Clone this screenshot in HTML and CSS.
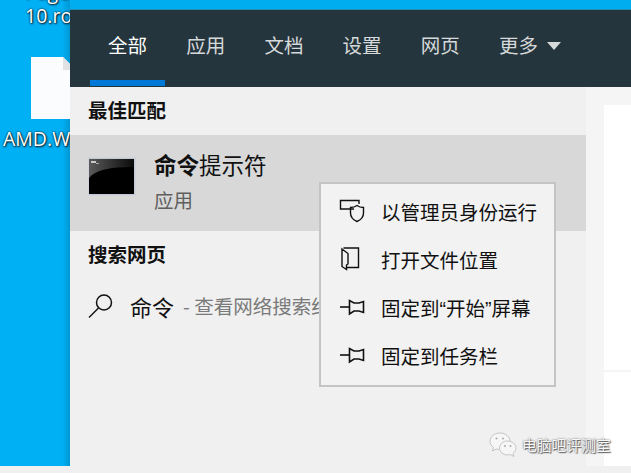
FILE: index.html
```html
<!DOCTYPE html>
<html lang="zh-CN">
<head>
<meta charset="utf-8">
<title>命令提示符</title>
<link rel="stylesheet" href="styles.css">
</head>
<body>
<div class="screen">
  <div class="desktop">
    <div class="desk-label desk-top">Page<br>10.rom</div>
    <div class="file-icon"><svg width="39" height="62" viewBox="0 0 39 62"><path d="M0 0H32L39 7V62H0Z" fill="#fbfcfd"/><path d="M32 0V13H39V7Z" fill="#dfe1e3"/></svg></div>
    <div class="desk-label desk-amd">AMD.WAV</div>
  </div>

  <div class="panel">
    <nav class="tabs">
      <span class="tab active">全部</span>
      <span class="tab">应用</span>
      <span class="tab">文档</span>
      <span class="tab">设置</span>
      <span class="tab">网页</span>
      <span class="tab">更多<i class="caret"></i></span>
    </nav>
    <div class="panel-body">
      <main class="results">
        <h2 class="section first">最佳匹配</h2>
        <div class="best">
          <svg class="cmd" width="48" height="39" viewBox="0 0 48 39">
            <defs><linearGradient id="g" x1="0" y1="0" x2="1" y2="0"><stop offset="0" stop-color="#5a5a5a"/><stop offset="1" stop-color="#0a0a0a"/></linearGradient></defs>
            <rect x="0.5" y="0.5" width="47" height="38" fill="#c3c9d2" stroke="#d0d4da"/>
            <rect x="1" y="2" width="45" height="35" fill="url(#g)"/>
            <path d="M1 21C7 13 22 10 46 10V37H1Z" fill="#000"/>
            <rect x="3" y="4" width="5" height="2" fill="#c8c8c8"/><rect x="8" y="6" width="3" height="1" fill="#aaa"/>
          </svg>
          <div class="best-text">
            <div class="best-title"><b>命令</b>提示符</div>
            <div class="best-sub">应用</div>
          </div>
        </div>
        <h2 class="section">搜索网页</h2>
        <div class="web-row">
          <svg class="search" width="26" height="26" viewBox="0 0 26 26" fill="none" stroke="#111" stroke-width="1.5"><circle cx="16" cy="9.500" r="7.500"/><path d="M10.500 15L1 24.500"/></svg>
          <span class="query">命令</span>
          <span class="hint">- 查看网络搜索结果</span>
        </div>
      </main>
      <aside class="preview"><div class="preview-top"></div><div class="preview-bottom"></div></aside>
    </div>
  </div>

  <ul class="menu">
    <li><svg width="26" height="24" viewBox="0 0 26 24" fill="none" stroke="#111" stroke-width="1.4"><path d="M15 10H1.500V1.500H20V5"/><path d="M18 6.500C20 8 22 8.500 24.500 8.500V14C24.500 18 21.500 21 18 22.500C14.500 21 11.500 18 11.500 14V8.500C14 8.500 16 8 18 6.500Z"/></svg><span>以管理员身份运行</span></li>
    <li><svg width="26" height="24" viewBox="0 0 26 24" fill="none" stroke="#111" stroke-width="1.4"><path d="M4.500 1H19.500V20.500H7.500"/><path d="M3 2L9 6.500V17L7.500 18V22.500L3 19.500Z"/></svg><span>打开文件位置</span></li>
    <li><svg width="26" height="24" viewBox="0 0 26 24" fill="none" stroke="#111" stroke-width="1.6"><path d="M1 12H10.500"/><path d="M10.500 5.500V19L15 16H20L24.500 17.500V6.500L20 8H15Z"/></svg><span>固定到<span class="q">“</span>开始<span class="q">”</span>屏幕</span></li>
    <li><svg width="26" height="24" viewBox="0 0 26 24" fill="none" stroke="#111" stroke-width="1.6"><path d="M1 12H10.500"/><path d="M10.500 5.500V19L15 16H20L24.500 17.500V6.500L20 8H15Z"/></svg><span>固定到任务栏</span></li>
  </ul>

  <div class="watermark">
    <svg width="28" height="26" viewBox="0 0 28 26"><g fill="#f6f6f6" stroke="#c4c4c4"><path d="M11 1C5.500 1 1 4.700 1 9.200C1 12 2.500 14 4.500 15.500L3.500 19L7.500 17C9 17.400 10 17.500 11 17.500C17 17.500 21 13.700 21 9.200C21 4.700 16.500 1 11 1Z"/><path d="M18.500 9C14 9 10.500 12.200 10.500 16S14 23 18.500 23C19.500 23 20.500 22.800 21.300 22.500L25 24.500L24 21.200C26 19.800 27 18 27 16C27 12.200 23 9 18.500 9Z"/></g><g fill="#aaa"><circle cx="7.500" cy="6.500" r="1"/><circle cx="14" cy="6.500" r="1"/><circle cx="16" cy="14" r="1"/><circle cx="21.500" cy="14" r="1"/></g></svg>
    <span>电脑吧评测室</span>
  </div>
</div>
</body>
</html>
```
FILE: styles.css
```css
* { box-sizing: border-box; }
html, body { margin: 0; padding: 0; }
body { width: 631px; height: 473px; overflow: hidden; background: #f0f0f0; font-family: "Noto Sans CJK SC", "Noto Sans", sans-serif; }

.screen { position: relative; width: 631px; height: 466px; display: flex; padding-top: 9px; background: #00adef; }

.desktop { width: 70px; flex: none; overflow: hidden; position: relative; margin-top: -9px; background: linear-gradient(to right, #00b0f5 0, #00b0f5 62px, #0098d4 70px); }
.desk-label { color: #fff; font: 19.5px/24px "Open Sans", "Liberation Sans", sans-serif; text-shadow: 0 0 2px #000, 1px 1px 2px #123; white-space: nowrap; }
.desk-top { margin: -20px 0 0 25px; }
.file-icon { margin: 29px 0 0 31px; height: 62px; }
.file-icon svg { display: block; }
.desk-amd { margin: 8px 0 0 3px; }

.panel { flex: 1; display: flex; flex-direction: column; min-width: 0; }
.tabs { height: 78px; background: #25353d; display: flex; padding-left: 38px; align-items: flex-start; border-top: 1px solid #1f8fb8; }
.tab { position: relative; color: #d6d9da; font-size: 19.5px; line-height: 28px; padding: 21px 0 0; flex: 0 0 78.2px; white-space: nowrap; }
.tab.active { color: #fff; }
.tab.active::after { content: ""; position: absolute; left: -18px; top: 70px; width: 75px; height: 6px; background: #0078d7; }
.caret { display: inline-block; margin-left: 9px; vertical-align: 3px; border: 7.500px solid transparent; border-top: 8px solid #d6d9da; border-bottom: 0; }

.panel-body { flex: 1; display: flex; min-height: 0; }
.results { width: 516px; background: #f0f0f0; flex: none; overflow: hidden; }
.section { margin: 0; padding-left: 18px; font-size: 19.5px; line-height: 28px; font-weight: 700; color: #111; }
.section.first { padding-top: 9px; height: 48px; }
.best { height: 96px; background: #d8d8d8; display: flex; align-items: flex-start; padding-left: 18px; }
.cmd { margin-top: 22px; flex: none; }
.best-text { margin-left: 18px; padding-top: 13px; }
.best-title { font-size: 22.500px; line-height: 32px; color: #111; }
.best-title b { font-weight: 700; }
.best-sub { font-size: 19.500px; line-height: 28px; color: #5f5f5f; margin-top: 6px; }
.section:not(.first) { padding-top: 9px; }
.web-row { display: flex; align-items: center; padding: 22px 0 0 18px; white-space: nowrap; }
.search { flex: none; }
.query { font-size: 22px; line-height: 32px; color: #111; margin-left: 16px; }
.hint { font-size: 19.500px; line-height: 28px; color: #7a7a7a; margin-left: 9px; }

.preview { flex: 1; background: #f5f5f5; padding: 18px 0 0 18px; display: flex; flex-direction: column; }
.preview-top { height: 265px; background: #fff; }
.preview-bottom { flex: 1; margin-top: 2px; background: #fff; }

.menu { position: absolute; left: 319px; top: 182px; width: 237px; height: 205px; margin: 0; padding: 3px 0 0; list-style: none; background: #f2f2f2; border: 2px solid #c4c4c4; }
.menu li { display: flex; align-items: center; height: 48px; padding-left: 18px; color: #111; font-size: 19.500px; white-space: nowrap; }
.menu svg { flex: none; margin-right: 16px; }
.q { font-family: "Liberation Sans", sans-serif; }

.watermark { position: absolute; left: 489px; top: 432px; display: flex; align-items: center; gap: 5px; color: #f7f7f7; font-size: 14.800px; line-height: 26px; text-shadow: 0 0 2px #555, 1px 1px 1px #666; }
.watermark svg { flex: none; }
```
